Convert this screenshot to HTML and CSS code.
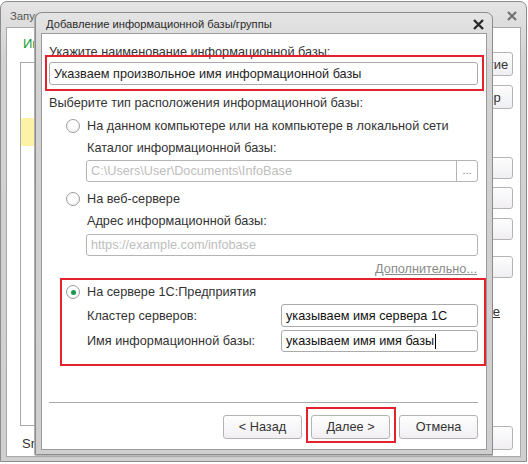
FILE: index.html
```html
<!DOCTYPE html>
<html lang="ru">
<head>
<meta charset="utf-8">
<link rel="stylesheet" href="styles.css">
</head>
<body>
<div class="desk">
  <div class="win bgwin">
    <div class="tbar bgtbar">
      <span class="ttext">Запуск</span>
      <svg class="xicon" width="10" height="10" viewBox="0 0 10 10"><path d="M1 1L9 9M9 1L1 9" stroke="#6e6e6e" stroke-width="2"/></svg>
    </div>
    <div class="client bgclient">
      <div class="bgleft">
        <div class="greentitle"><span>Информационные базы</span></div>
        <div class="listbox">
          <div class="lrow sel"></div>
        </div>
        <div class="conn">Srvr</div>
      </div>
      <div class="bgright">
        <div class="bbtn b1">1С:Предприятие</div>
        <div class="bbtn b2">Конфигуратор</div>
        <div class="bbtn b3"></div>
        <div class="bbtn b4"></div>
        <div class="bbtn b5"></div>
        <div class="bbtn b6"></div>
        <div class="blink"><span>Подробнее</span></div>
        <div class="bbtn b7"></div>
      </div>
    </div>
  </div>

  <div class="win dlg">
    <div class="tbar dtbar">
      <span class="ttext">Добавление информационной базы/группы</span>
      <svg class="xicon" width="11" height="11" viewBox="0 0 11 11"><path d="M1 1L10 10M10 1L1 10" stroke="#2b2b2b" stroke-width="2.4"/></svg>
    </div>
    <div class="client dclient">
      <div class="lbl l1">Укажите наименование информационной базы:</div>
      <div class="inp i1">Указваем произвольное имя информационной базы</div>
      <div class="lbl l2">Выберите тип расположения информационной базы:</div>
      <div class="rrow r1"><span class="radio"></span><span>На данном компьютере или на компьютере в локальной сети</span></div>
      <div class="lbl sub s1">Каталог информационной базы:</div>
      <div class="inp sinp dis i2"><span class="ph">C:\Users\User\Documents\InfoBase</span><span class="dots">...</span></div>
      <div class="rrow r2"><span class="radio"></span><span>На веб-сервере</span></div>
      <div class="lbl sub s2">Адрес информационной базы:</div>
      <div class="inp sinp dis i3"><span class="ph">https://example.com/infobase</span></div>
      <div class="more"><span>Дополнительно...</span></div>
      <div class="rrow r3"><span class="radio on"></span><span>На сервере 1С:Предприятия</span></div>
      <div class="frow f1"><span class="flbl">Кластер серверов:</span><div class="inp finp">указываем имя сервера 1С</div></div>
      <div class="frow f2"><span class="flbl">Имя информационной базы:</span><div class="inp finp">указываем имя имя базы<span class="caret"></span></div></div>
      <div class="sep"></div>
      <div class="btns">
        <div class="btn">&lt; Назад</div>
        <div class="btn">Далее &gt;</div>
        <div class="btn">Отмена</div>
      </div>
      <div class="redbox rb1"></div>
      <div class="redbox rb2"></div>
      <div class="redbox rb3"></div>
    </div>
  </div>
</div>
</body>
</html>
```
FILE: styles.css
```css
* { box-sizing: border-box; }
html, body { margin: 0; padding: 0; }
body {
  width: 528px; height: 464px; overflow: hidden;
  background: #ffffff;
  font-family: "Liberation Sans", Arial, sans-serif;
  font-size: 12.7px; color: #333;
}
.desk { position: relative; width: 528px; height: 464px; }

.win {
  position: absolute;
  display: flex; flex-direction: column;
  background: linear-gradient(#e4e4e4, #d2d2d2 60px, #cfcfcf);
  border: 1px solid #8c8c8c;
  border-radius: 7px 7px 0 0;
}
.tbar { display: flex; align-items: center; justify-content: space-between; flex: none; }
.ttext { white-space: nowrap; overflow: hidden; }
.client { background: #fff; flex: 1; position: relative; }

/* background window */
.bgwin { left: 0; top: 1px; width: 527px; height: 461px; padding: 0 5px 4px 5px; }
.bgtbar { height: 25px; padding: 2px 4px 0 4px; color: #555; font-size: 11.3px; }
.bgclient { border: 1px solid #a8a8a8; display: flex; justify-content: space-between; }
.bgleft { display: flex; flex-direction: column; padding: 9px 0 0 13px; width: 300px; }
.greentitle { color: #169a3c; padding-left: 3px; line-height: 14px; font-size: 13px; width: 22px; overflow: hidden; white-space: nowrap; }
.listbox { margin-top: 11px; height: 364px; border: 1px solid #a8a8a8; padding-top: 55px; }
.lrow.sel { background: #fdf3a6; height: 28px; width: 15px; }
.conn { margin-top: 10px; padding-left: 2px; font-size: 13px; }
.bgright { display: flex; flex-direction: column; align-items: flex-end; padding: 24px 7px 0 0; }
.bbtn {
  width: 110px; height: 24px; border: 1px solid #b4b4b4; border-radius: 3px;
  background: linear-gradient(#fdfdfd, #f0eef2);
  display: flex; align-items: center; justify-content: center; color: #333; font-size: 13px;
}
.b2 { margin-top: 9px; }
.b3 { margin-top: 48px; height: 22px; }
.b4 { margin-top: 8px; height: 22px; }
.b5 { margin-top: 9px; height: 22px; }
.b6 { margin-top: 16px; height: 22px; }
.blink { margin-top: 26px; margin-right: 13px; width: 8px; overflow: hidden; display: flex; justify-content: flex-end; text-decoration: underline; line-height: 15px; font-size: 13px; white-space: nowrap; }
.blink span { flex: none; }
.b7 { margin-top: 107px; }

/* dialog */
.dlg { left: 35px; top: 12px; width: 458px; height: 443px; padding: 0 5px 4px 5px; box-shadow: -1px 0 0 #b0b0b0, 0 1px 0 #b8b8b8; }
.dtbar { height: 20px; padding: 1px 4px 0 5px; color: #2a2a2a; font-size: 11.2px; }
.dtbar .xicon { margin-top: 2px; margin-right: -1px; }
.dclient { border: 1px solid #9a9a9a; display: flex; flex-direction: column; padding: 0 8px 0 7px; }

.lbl { line-height: 16px; white-space: nowrap; }
.l1 { margin-top: 10px; }
.inp {
  height: 23px; border: 1px solid #ababab; border-radius: 3px; background: #fff;
  display: flex; align-items: center; padding-left: 4px; color: #1e1e1e; white-space: nowrap;
}
.i1 { margin-top: 2px; }
.l2 { margin-top: 10px; }
.rrow { display: flex; align-items: center; height: 16px; gap: 7px; padding-left: 17px; }
.radio {
  width: 14px; height: 14px; border-radius: 50%; border: 1px solid #9d9d9d;
  background: radial-gradient(circle at 50% 40%, #ffffff 40%, #ececec);
  display: inline-flex; align-items: center; justify-content: center; flex: none;
}
.radio.on::after { content: ""; width: 5px; height: 5px; border-radius: 50%; background: #16994a; }
.r1 { margin-top: 7px; }
.sub { padding-left: 38px; }
.s1 { margin-top: 6px; }
.sinp { margin-left: 37px; height: 22px; justify-content: space-between; padding-right: 0; }
.dis { border-color: #b4b4b4; }
.ph { color: #bdbdbd; }
.dots { width: 21px; height: 100%; border-left: 1px solid #b4b4b4; display: flex; align-items: center; justify-content: center; color: #777; font-size: 11px; padding-bottom: 2px; }
.i2 { margin-top: 4px; }
.r2 { margin-top: 9px; }
.s2 { margin-top: 6px; }
.i3 { margin-top: 5px; }
.more { margin-top: 5px; line-height: 16px; text-align: right; color: #8a8a8a; padding-right: 1px; }
.more span { text-decoration: underline; }
.r3 { margin-top: 7px; }
.frow { display: flex; align-items: center; justify-content: space-between; padding-left: 38px; }
.f1 { margin-top: 4px; }
.f2 { margin-top: 3px; }
.finp { width: 197px; height: 23px; color: #111; }
.f2 .finp { height: 22px; }
.caret { display: inline-block; width: 1px; height: 15px; background: #000; margin-left: 1px; }
.sep { margin-top: 50px; height: 1px; background: #a9a9a9; }
.btns { display: flex; justify-content: flex-end; gap: 9px; margin-top: 12px; }
.btn {
  width: 79px; height: 24px; border: 1px solid #b4b4b4; border-radius: 3px;
  background: linear-gradient(#fefefe, #f1eff3);
  display: flex; align-items: center; justify-content: center; color: #333;
}

.redbox { position: absolute; border: 2px solid #e4222b; }
.rb1 { left: 3px; top: 21px; width: 439px; height: 36px; }
.rb2 { left: 18px; top: 244px; width: 426px; height: 88px; }
.rb3 { left: 264px; top: 373px; width: 90px; height: 36px; }
```
